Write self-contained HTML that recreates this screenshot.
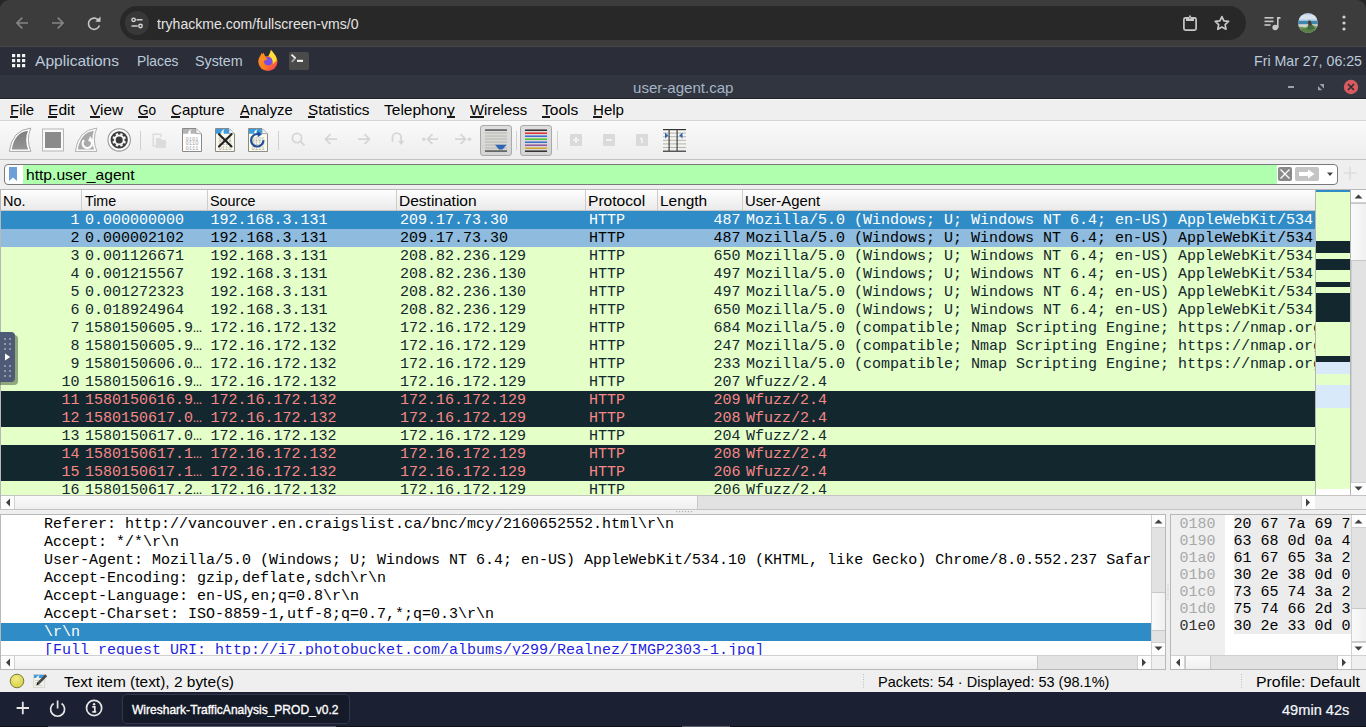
<!DOCTYPE html>
<html><head><meta charset="utf-8"><style>
*{box-sizing:border-box}
html,body{margin:0;padding:0}
body{width:1366px;height:727px;overflow:hidden;position:relative;background:#efefef;font-family:"Liberation Sans",sans-serif}
.a{position:absolute}
.t{position:absolute;white-space:pre;line-height:1}
.m{position:absolute;white-space:pre;font-family:"Liberation Mono",monospace;font-size:15px;line-height:18px}
svg{position:absolute;overflow:visible}
</style></head><body>
<div class="a" style="left:0;top:0;width:1366px;height:46px;background:#3c3c3c"></div>
<svg style="left:0;top:0" width="10" height="10"><path d="M0 0H9A9 9 0 0 0 0 9Z" fill="#262626"/></svg>
<svg style="left:1356px;top:0" width="10" height="10"><path d="M10 0H1A9 9 0 0 1 10 9Z" fill="#262626"/></svg>
<div class="a" style="left:120px;top:6px;width:1126px;height:34px;border-radius:17px;background:#282828"></div>
<div class="a" style="left:125px;top:11px;width:24px;height:24px;border-radius:12px;background:#383838"></div>
<svg style="left:0;top:0" width="120" height="46"><g fill="none" stroke="#858585" stroke-width="1.6"><path d="M17 23H28M22.3 17.6L16.9 23L22.3 28.4"/><path d="M52 23H63M57.7 17.6L63.1 23L57.7 28.4"/></g><g fill="none" stroke="#c8c8c8" stroke-width="1.6"><path d="M99.2 21.5A5.6 5.6 0 1 0 99.4 25.5"/></g><path d="M95.5 17H100.5V22H95.5Z" fill="none"/><path d="M100.5 16.5V21.8H95.2Z" fill="#c8c8c8"/></svg>
<svg style="left:125px;top:11px" width="24" height="24"><g fill="none" stroke="#d8d8d8" stroke-width="1.4"><circle cx="8.6" cy="8.8" r="1.7"/><path d="M11.5 8.8H17.5"/><circle cx="15.5" cy="15" r="1.7"/><path d="M6.5 15H12.7"/></g></svg>
<div class="t" style="left:156.93px;top:17px;font-size:14px;color:#e3e3e3;font-weight:400;font-family:'Liberation Sans';transform:scaleX(1.0039);transform-origin:0 0;">tryhackme.com/fullscreen-vms/0</div>
<svg style="left:1176px;top:8px" width="190" height="32"><g fill="none" stroke="#c8c8c8" stroke-width="1.7"><rect x="7.9" y="9.8" width="12.2" height="12.4" rx="1.6"/></g><path d="M10 9H18V13H10Z" fill="#c8c8c8"/><path d="M12.6 9.2L14 6.8L15.4 9.2Z" fill="#c8c8c8"/><rect x="13.2" y="9.6" width="1.6" height="1" fill="#555"/><path d="M45.90 8.60L47.90 12.85L52.56 13.44L49.13 16.65L50.01 21.26L45.90 19.00L41.79 21.26L42.67 16.65L39.24 13.44L43.90 12.85Z" fill="none" stroke="#c8c8c8" stroke-width="1.7" stroke-linejoin="round"/><g fill="#c8c8c8"><rect x="88.5" y="9" width="9" height="1.6"/><rect x="88.5" y="12.6" width="9" height="1.6"/><rect x="88.5" y="16.2" width="6" height="1.6"/><rect x="101" y="9" width="1.6" height="11"/><rect x="101" y="9" width="3.5" height="1.8"/><circle cx="99.2" cy="19.5" r="2.8"/></g><g fill="#d0d0d0"><circle cx="168" cy="9" r="1.6"/><circle cx="168" cy="15" r="1.6"/><circle cx="168" cy="21" r="1.6"/></g></svg>
<svg style="left:1298px;top:13px" width="20" height="20"><defs><clipPath id="av"><circle cx="10" cy="10" r="9.9"/></clipPath></defs><g clip-path="url(#av)"><rect width="20" height="20" fill="#bcd2e6"/><rect y="2" width="20" height="4" fill="#d6e2ee"/><rect y="7.8" width="20" height="3.6" fill="#3f86ad"/><rect y="11.4" width="20" height="2.4" fill="#d4d2c4"/><path d="M0 13.5L8 14.5L12 11L20 14V20H0Z" fill="#6f9350"/><path d="M4 16L10 15L16 17L20 16V20H0Z" fill="#5b7e44"/><path d="M10.3 7.8C11.6 7 13 7.6 13.2 9L14 12.5L11 14L10.2 11Z" fill="#4a3a2e"/><path d="M10.5 12L14.5 12.5L17 16L9 17Z" fill="#3f6a45"/></g></svg>
<div class="a" style="left:0;top:46px;width:1366px;height:1px;background:#464847"></div>
<div class="a" style="left:0;top:47px;width:1366px;height:28px;background:#2b2e38"></div>
<svg style="left:0;top:0" width="40" height="75"><g fill="#f2f2f2"><rect x="12" y="54" width="3.2" height="3.2"/><rect x="17" y="54" width="3.2" height="3.2"/><rect x="22" y="54" width="3.2" height="3.2"/><rect x="12" y="59" width="3.2" height="3.2"/><rect x="17" y="59" width="3.2" height="3.2"/><rect x="22" y="59" width="3.2" height="3.2"/><rect x="12" y="64" width="3.2" height="3.2"/><rect x="17" y="64" width="3.2" height="3.2"/><rect x="22" y="64" width="3.2" height="3.2"/></g></svg>
<div class="t" style="left:35.0px;top:53px;font-size:15px;color:#bccadb;font-weight:400;font-family:'Liberation Sans';transform:scaleX(1.0385);transform-origin:0 0;">Applications</div>
<div class="t" style="left:136.95px;top:53px;font-size:15px;color:#bccadb;font-weight:400;font-family:'Liberation Sans';transform:scaleX(0.9217);transform-origin:0 0;">Places</div>
<div class="t" style="left:194.71px;top:53px;font-size:15px;color:#bccadb;font-weight:400;font-family:'Liberation Sans';transform:scaleX(0.9538);transform-origin:0 0;">System</div>
<svg style="left:254px;top:47px" width="28" height="26"><defs><linearGradient id="ffg" x1="0.1" y1="0.2" x2="0.8" y2="1"><stop offset="0" stop-color="#ff8f1f"/><stop offset="0.6" stop-color="#ff7a1f"/><stop offset="1" stop-color="#f5386a"/></linearGradient></defs><circle cx="13.9" cy="14.5" r="9.6" fill="url(#ffg)"/><path d="M10.2 2.5L17 2.5L15.5 8.5L13 9.6L10.6 9L9.6 5.5Z" fill="#2b2e38"/><path d="M4 2L9.8 2L9.6 5L7.4 5.8L6.4 7.2L3 6Z" fill="#2b2e38"/><path d="M7.4 5.8L6.4 9.5L9 9Z M9.6 5.5L9 9L10.8 9Z" fill="#ff8f1f"/><path d="M16.8 2.8C19.5 5.5 22.5 9 22.6 13.5L19 17C18.5 12 16 9.5 14.5 8.5C15.8 7 16.5 5 16.8 2.8Z" fill="#ffde3a"/><circle cx="14.2" cy="14.2" r="4.3" fill="#7a4fe0"/><path d="M6 11.5C8 10 11 10.2 13.6 12.2L11 13.5C9 14 7 13 6 11.5Z" fill="#ff8c1c"/></svg>
<div class="a" style="left:289px;top:52px;width:20px;height:18px;border-radius:2px;background:#4a4a4a"></div>
<svg style="left:289px;top:52px" width="20" height="18"><path d="M6.3 6.2L2.8 9.8" fill="none" stroke="#a8a8a8" stroke-width="1.7"/><path d="M2.5 2.6L6.6 6.4" fill="none" stroke="#f2f2f2" stroke-width="1.8"/><rect x="8" y="7.8" width="6" height="2.1" fill="#f4f4f4"/></svg>
<div class="t" style="left:1253.73px;top:53px;font-size:15px;color:#bccadb;font-weight:400;font-family:'Liberation Sans';transform:scaleX(0.9456);transform-origin:0 0;">Fri Mar 27, 06:25</div>
<div class="a" style="left:0;top:75px;width:1366px;height:24px;background:#31353f"></div>
<div class="a" style="left:0;top:98px;width:1366px;height:1px;background:#21242d"></div>
<div class="t" style="left:632.55px;top:80px;font-size:15px;color:#a6b4c6;font-weight:400;font-family:'Liberation Sans';transform:scaleX(1.0044);transform-origin:0 0;">user-agent.cap</div>
<svg style="left:1280px;top:75px" width="86" height="24"><rect x="8" y="11" width="6" height="2" fill="#9aa1ad"/><path d="M39.6 9H44V13.4Z" fill="#9aa1ad"/><path d="M38 11V15.2H42.2Z" fill="#9aa1ad"/><circle cx="71" cy="12" r="7.2" fill="#d95a5f"/><path d="M68 9L74 15M74 9L68 15" stroke="#2a2d36" stroke-width="1.6"/></svg>
<div class="a" style="left:0;top:99px;width:1366px;height:22px;background:#efefef;border-top:1px solid #fafafa;border-bottom:1px solid #d4d4d4"></div>
<div class="t" style="left:9.6px;top:102px;font-size:15px;color:#000;font-weight:400;font-family:'Liberation Sans';transform:scaleX(0.9971);transform-origin:0 0;">File</div>
<div class="a" style="left:10.3px;top:116px;width:7.6px;height:2px;background:#1a1a1a"></div>
<div class="t" style="left:48.28px;top:102px;font-size:15px;color:#000;font-weight:400;font-family:'Liberation Sans';transform:scaleX(1.0407);transform-origin:0 0;">Edit</div>
<div class="a" style="left:48.0px;top:116px;width:8.7px;height:2px;background:#1a1a1a"></div>
<div class="t" style="left:90.2px;top:102px;font-size:15px;color:#000;font-weight:400;font-family:'Liberation Sans';transform:scaleX(1.0266);transform-origin:0 0;">View</div>
<div class="a" style="left:90.0px;top:116px;width:9.8px;height:2px;background:#1a1a1a"></div>
<div class="t" style="left:137.86px;top:102px;font-size:15px;color:#000;font-weight:400;font-family:'Liberation Sans';transform:scaleX(0.9095);transform-origin:0 0;">Go</div>
<div class="a" style="left:138.0px;top:116px;width:9.5px;height:2px;background:#1a1a1a"></div>
<div class="t" style="left:170.92px;top:102px;font-size:15px;color:#000;font-weight:400;font-family:'Liberation Sans';transform:scaleX(1.0044);transform-origin:0 0;">Capture</div>
<div class="a" style="left:171.3px;top:116px;width:8.4px;height:2px;background:#1a1a1a"></div>
<div class="t" style="left:240.1px;top:102px;font-size:15px;color:#000;font-weight:400;font-family:'Liberation Sans';transform:scaleX(0.9875);transform-origin:0 0;">Analyze</div>
<div class="a" style="left:240.0px;top:116px;width:9.0px;height:2px;background:#1a1a1a"></div>
<div class="t" style="left:307.69px;top:102px;font-size:15px;color:#000;font-weight:400;font-family:'Liberation Sans';transform:scaleX(1.0247);transform-origin:0 0;">Statistics</div>
<div class="a" style="left:308.0px;top:116px;width:7.0px;height:2px;background:#1a1a1a"></div>
<div class="t" style="left:384.14px;top:102px;font-size:15px;color:#000;font-weight:400;font-family:'Liberation Sans';transform:scaleX(1.0338);transform-origin:0 0;">Telephony</div>
<div class="a" style="left:447.0px;top:116px;width:8.0px;height:2px;background:#1a1a1a"></div>
<div class="t" style="left:470.3px;top:102px;font-size:15px;color:#000;font-weight:400;font-family:'Liberation Sans';transform:scaleX(0.9930);transform-origin:0 0;">Wireless</div>
<div class="a" style="left:470.3px;top:116px;width:13.7px;height:2px;background:#1a1a1a"></div>
<div class="t" style="left:542.14px;top:102px;font-size:15px;color:#000;font-weight:400;font-family:'Liberation Sans';transform:scaleX(1.0366);transform-origin:0 0;">Tools</div>
<div class="a" style="left:542.0px;top:116px;width:8.0px;height:2px;background:#1a1a1a"></div>
<div class="t" style="left:592.7px;top:102px;font-size:15px;color:#000;font-weight:400;font-family:'Liberation Sans';transform:scaleX(1.0048);transform-origin:0 0;">Help</div>
<div class="a" style="left:593.3px;top:116px;width:8.7px;height:2px;background:#1a1a1a"></div>
<div class="a" style="left:0;top:121px;width:1366px;height:38px;background:linear-gradient(#fafafa,#ededed)"></div>
<div class="a" style="left:0;top:159px;width:1366px;height:1px;background:#c2c2c2"></div>
<svg style="left:0;top:121px" width="140" height="38"><defs><linearGradient id="fin" x1="0" y1="0" x2="0" y2="1"><stop offset="0" stop-color="#7d7d7d"/><stop offset="1" stop-color="#959595"/></linearGradient></defs><path d="M9.3 30.4Q12 9 30.8 7.1Q26 18 30.8 30.4Z" fill="#fdfdfd" stroke="#a8a8a8" stroke-width="1"/><path d="M11.8 28.6Q14.5 11.5 27.9 9.8Q24.3 19 28.1 28.6Z" fill="url(#fin)"/><rect x="42.5" y="8" width="21" height="22" fill="#fafafa" stroke="#b5b5b5"/><rect x="45" y="11" width="16" height="16" fill="#8a8a8a"/><path d="M75.3 30.4Q78 9 96.8 7.1Q92 18 96.8 30.4Z" fill="#fdfdfd" stroke="#b0b0b0" stroke-width="1"/><path d="M77.8 28.6Q80.5 11.5 93.9 9.8Q90.3 19 94.1 28.6Z" fill="#a9a9a9"/><path d="M84 19.2A4.6 4.6 0 1 0 90.6 19.2" fill="none" stroke="#fbfbfb" stroke-width="2.3"/><path d="M88 20.2L93.2 20.2L90.2 15Z" fill="#fbfbfb"/><circle cx="119.2" cy="18.9" r="11.2" fill="#fbfbfb" stroke="#999" stroke-width="1.1"/><circle cx="119.2" cy="18.9" r="8.6" fill="#3c3c3c"/></svg>
<svg style="left:0;top:0" width="140" height="160"><g fill="#f4f4f4"><rect x="123.27" y="140.88" width="2.4" height="2.4" transform="rotate(22.5 124.47 142.08)"/><rect x="120.18" y="143.97" width="2.4" height="2.4" transform="rotate(67.5 121.38 145.17)"/><rect x="115.82" y="143.97" width="2.4" height="2.4" transform="rotate(112.5 117.02 145.17)"/><rect x="112.73" y="140.88" width="2.4" height="2.4" transform="rotate(157.5 113.93 142.08)"/><rect x="112.73" y="136.52" width="2.4" height="2.4" transform="rotate(202.5 113.93 137.72)"/><rect x="115.82" y="133.43" width="2.4" height="2.4" transform="rotate(247.5 117.02 134.63)"/><rect x="120.18" y="133.43" width="2.4" height="2.4" transform="rotate(292.5 121.38 134.63)"/><rect x="123.27" y="136.52" width="2.4" height="2.4" transform="rotate(337.5 124.47 137.72)"/><circle cx="119.2" cy="139.9" r="5.4"/></g><circle cx="119.2" cy="139.9" r="3.5" fill="#3a3a3a"/></svg>
<div class="a" style="left:140px;top:131px;width:1px;height:19px;background:#d0d0d0"></div>
<div class="a" style="left:278px;top:131px;width:1px;height:19px;background:#d0d0d0"></div>
<div class="a" style="left:516px;top:131px;width:1px;height:19px;background:#d0d0d0"></div>
<div class="a" style="left:557px;top:131px;width:1px;height:19px;background:#d0d0d0"></div>
<svg style="left:150px;top:131px" width="20" height="20"><g fill="#dcdcdc"><path d="M2.5 2.5H11.5V6H10V4H4V14H6V15.5H2.5Z"/><rect x="6" y="9" width="10" height="8"/><path d="M6 7H10.5L12 9H6Z"/></g></svg>
<svg style="left:181.5px;top:128px" width="21" height="24"><path d="M0.5 0.5H14L19.5 6V23.5H0.5Z" fill="#ffffff" stroke="#8a8a8a"/><path d="M1 1H13.8L18 5.2V5.8H1Z" fill="#b4b4b4"/><path d="M14 0.8V5.6H19" fill="#f4f4f4" stroke="#9a9a9a" stroke-width="0.7"/><path d="M6.5 6C5.5 4.5 7 2 9.5 1.3C8.3 2.8 8.2 4.5 9 6Z" fill="#ffffff"/><g opacity="0.99" font-family="Liberation Mono" font-size="5.4" fill="#a8a8a8"><text x="3.5" y="12.8" textLength="13">0101</text><text x="3.5" y="17.3" textLength="13">0110</text><text x="3.5" y="21.8" textLength="13">0111</text></g></svg>
<svg style="left:214.5px;top:128px" width="21" height="24"><path d="M0.5 0.5H14L19.5 6V23.5H0.5Z" fill="#fbfbea" stroke="#8a8a8a"/><path d="M1 1H13.8L18 5.2V5.8H1Z" fill="#3d9be0"/><path d="M14 0.8V5.6H19" fill="#f4f4f4" stroke="#9a9a9a" stroke-width="0.7"/><path d="M6.5 6C5.5 4.5 7 2 9.5 1.3C8.3 2.8 8.2 4.5 9 6Z" fill="#fbfbea"/><g opacity="0.99" font-family="Liberation Mono" font-size="5.4" fill="#a8a8a8"><text x="3.5" y="12.8" textLength="13">0101</text><text x="3.5" y="17.3" textLength="13">0110</text><text x="3.5" y="21.8" textLength="13">0111</text></g><path d="M4 6.2L16.5 18.5M16.5 6.2L4 18.5" stroke="#222" stroke-width="2.1" stroke-linecap="round"/></svg>
<svg style="left:247.5px;top:128px" width="21" height="24"><path d="M0.5 0.5H14L19.5 6V23.5H0.5Z" fill="#fbfbea" stroke="#8a8a8a"/><path d="M1 1H13.8L18 5.2V5.8H1Z" fill="#3d9be0"/><path d="M14 0.8V5.6H19" fill="#f4f4f4" stroke="#9a9a9a" stroke-width="0.7"/><path d="M6.5 6C5.5 4.5 7 2 9.5 1.3C8.3 2.8 8.2 4.5 9 6Z" fill="#fbfbea"/><g opacity="0.99" font-family="Liberation Mono" font-size="5.4" fill="#a8a8a8"><text x="3.5" y="12.8" textLength="13">0101</text><text x="3.5" y="17.3" textLength="13">0110</text><text x="3.5" y="21.8" textLength="13">0111</text></g><path d="M15.5 12.2A6.2 6.2 0 1 1 10.5 6.2" fill="none" stroke="#1f4e9c" stroke-width="2.1"/><path d="M9.5 3.2L14 6.3L9.7 9.2Z" fill="#1f4e9c"/></svg>
<svg style="left:280px;top:121px" width="200" height="38"><g fill="none" stroke="#d6d6d6" stroke-width="1.8"><circle cx="17" cy="17" r="4.6"/><path d="M20.5 20.5L24.5 24.5"/><path d="M45.5 18.2H57M50.5 13.2L45.5 18.2L50.5 23.2"/><path d="M78 18.2H89.5M84.5 13.2L89.5 18.2L84.5 23.2"/><path d="M112.5 21V16.5A4.3 4.3 0 0 1 121.1 16.5V20.5"/></g><path d="M118 19.8H124.2L121.1 24Z" fill="#d6d6d6"/><g fill="none" stroke="#d6d6d6" stroke-width="1.8"><path d="M147.5 18.2H158M152.5 13.2L147.5 18.2L152.5 23.2"/><path d="M175 18.2H185.5M180.5 13.2L185.5 18.2L180.5 23.2"/></g><g fill="#d6d6d6"><circle cx="143.8" cy="18.2" r="1.8"/><circle cx="189.5" cy="18.2" r="1.8"/></g></svg>
<div class="a" style="left:480px;top:125px;width:32px;height:31px;border:1px solid #a9a9a9;border-radius:3px;background:linear-gradient(#dedede,#d4d4d4)"></div>
<div class="a" style="left:520px;top:125px;width:32px;height:31px;border:1px solid #a9a9a9;border-radius:3px;background:linear-gradient(#dedede,#d4d4d4)"></div>
<svg style="left:480px;top:125px" width="32" height="31"><rect x="5" y="4.5" width="22" height="1.1" fill="#222"/><rect x="5" y="7.5" width="22" height="1.1" fill="#b9b9b0"/><rect x="5" y="10.5" width="22" height="1.1" fill="#b9b9b0"/><rect x="5" y="13.5" width="22" height="1.1" fill="#b9b9b0"/><rect x="5" y="16.5" width="22" height="1.1" fill="#b9b9b0"/><rect x="5" y="19.5" width="22" height="1.1" fill="#b9b9b0"/><rect x="5" y="22.5" width="22" height="1.1" fill="#b9b9b0"/><rect x="5" y="25.5" width="22" height="1.1" fill="#222"/><path d="M15 19.8H26.5L22.5 24.5H19Z" fill="#2f66b3"/></svg>
<svg style="left:520px;top:125px" width="32" height="31"><rect x="5" y="4.5" width="22" height="1.4" fill="#222"/><rect x="5" y="7.5" width="22" height="1.4" fill="#e02020"/><rect x="5" y="10.5" width="22" height="1.4" fill="#2f5fcf"/><rect x="5" y="13.5" width="22" height="1.4" fill="#40c020"/><rect x="5" y="16.5" width="22" height="1.4" fill="#2f5fcf"/><rect x="5" y="19.5" width="22" height="1.4" fill="#8a4a9a"/><rect x="5" y="22.5" width="22" height="1.4" fill="#d0a020"/><rect x="5" y="25.5" width="22" height="1.4" fill="#222"/></svg>
<svg style="left:560px;top:121px" width="100" height="38"><g fill="#dadada"><rect x="10" y="13" width="12" height="12" rx="1"/><rect x="43" y="13" width="12" height="12" rx="1"/><rect x="76" y="13" width="12" height="12" rx="1"/></g><g fill="#f2f2f2"><rect x="13" y="18" width="6" height="2"/><rect x="15" y="16" width="2" height="6"/><rect x="46" y="18" width="6" height="2"/><path d="M80.5 16.5H82.7V22H81V18.5L79.8 19Z"/></g></svg>
<svg style="left:662.8px;top:126px" width="24" height="26"><rect x="0" y="3.0" width="23" height="1.2" fill="#333"/><rect x="0" y="6.6" width="23" height="1" fill="#b5b5a8"/><rect x="0" y="10.2" width="23" height="1" fill="#b5b5a8"/><rect x="0" y="13.8" width="23" height="1" fill="#b5b5a8"/><rect x="0" y="17.4" width="23" height="1" fill="#b5b5a8"/><rect x="0" y="21.0" width="23" height="1" fill="#b5b5a8"/><rect x="0" y="24.6" width="23" height="1.2" fill="#333"/><rect x="5.5" y="3" width="1.2" height="22" fill="#444"/><rect x="13.5" y="3" width="1.2" height="22" fill="#444"/><path d="M2 6.5L5.3 9.5L2 12.5Z" fill="#2f66b3"/><path d="M19.5 6.5L16.2 9.5L19.5 12.5Z" fill="#2f66b3"/></svg>
<div class="a" style="left:4px;top:164px;width:1334px;height:21px;border:1px solid #7a7a7a;border-radius:4px;background:#fff"></div>
<div class="a" style="left:22.5px;top:165px;width:1254.5px;height:19px;background:#afffaf"></div>
<svg style="left:8px;top:166px" width="12" height="16"><path d="M1 1H9V15L5 11.5L1 15Z" fill="#6f9fd8"/></svg>
<div class="t" style="left:25.93px;top:167px;font-size:15px;color:#000;font-weight:400;font-family:'Liberation Sans';transform:scaleX(1.0418);transform-origin:0 0;">http.user_agent</div>
<div class="a" style="left:1278px;top:167px;width:14px;height:14px;border-radius:2px;background:#8a8a8a"></div>
<svg style="left:1278px;top:167px" width="14" height="14"><path d="M2.5 2.5L11.5 11.5M11.5 2.5L2.5 11.5" stroke="#fff" stroke-width="1.3"/></svg>
<div class="a" style="left:1295px;top:167px;width:24px;height:14px;border-radius:2px;background:#c4c4c4"></div>
<svg style="left:1295px;top:167px" width="24" height="14"><path d="M4 5H13V2.5L19.5 7L13 11.5V9H4Z" fill="#fff"/></svg>
<svg style="left:1320px;top:167px" width="20" height="14"><path d="M7 5.5H13L10 9Z" fill="#444"/></svg>
<svg style="left:1340px;top:163px" width="22" height="22"><path d="M10 3.5V16.5M3.5 10H16.5" stroke="#d6d6d6" stroke-width="1.2"/></svg>
<div class="a" style="left:0;top:189px;width:1366px;height:1px;background:#b8b8b8"></div>
<div class="a" style="left:0;top:189px;width:1px;height:320px;background:#b8b8b8"></div>
<div class="a" style="left:1px;top:190px;width:1315px;height:21px;background:linear-gradient(#fefefe,#e9e9e9)"></div>
<div class="a" style="left:81px;top:190px;width:1px;height:21px;background:#cccccc"></div>
<div class="a" style="left:207px;top:190px;width:1px;height:21px;background:#cccccc"></div>
<div class="a" style="left:396px;top:190px;width:1px;height:21px;background:#cccccc"></div>
<div class="a" style="left:585px;top:190px;width:1px;height:21px;background:#cccccc"></div>
<div class="a" style="left:657px;top:190px;width:1px;height:21px;background:#cccccc"></div>
<div class="a" style="left:742px;top:190px;width:1px;height:21px;background:#cccccc"></div>
<div class="a" style="left:1px;top:210px;width:1315px;height:1px;background:#c9c6c2"></div>
<div class="t" style="left:3.32px;top:193px;font-size:15px;color:#000;font-weight:400;font-family:'Liberation Sans';transform:scaleX(0.9639);transform-origin:0 0;">No.</div>
<div class="t" style="left:85.46px;top:193px;font-size:15px;color:#000;font-weight:400;font-family:'Liberation Sans';transform:scaleX(0.9519);transform-origin:0 0;">Time</div>
<div class="t" style="left:209.71px;top:193px;font-size:15px;color:#000;font-weight:400;font-family:'Liberation Sans';transform:scaleX(0.9594);transform-origin:0 0;">Source</div>
<div class="t" style="left:399.38px;top:193px;font-size:15px;color:#000;font-weight:400;font-family:'Liberation Sans';transform:scaleX(1.0341);transform-origin:0 0;">Destination</div>
<div class="t" style="left:587.68px;top:193px;font-size:15px;color:#000;font-weight:400;font-family:'Liberation Sans';transform:scaleX(1.0376);transform-origin:0 0;">Protocol</div>
<div class="t" style="left:659.68px;top:193px;font-size:15px;color:#000;font-weight:400;font-family:'Liberation Sans';transform:scaleX(1.0288);transform-origin:0 0;">Length</div>
<div class="t" style="left:744.98px;top:193px;font-size:15px;color:#000;font-weight:400;font-family:'Liberation Sans';transform:scaleX(0.9886);transform-origin:0 0;">User-Agent</div>
<div class="a" style="left:1px;top:211px;width:1315px;height:284px;overflow:hidden;background:#fff">
<div class="a" style="left:0;top:0px;width:1315px;height:18px;background:#308cc6;color:#ffffff">
<div class="m" style="right:1236.5px;top:1px">1</div>
<div class="m" style="left:84px;top:1px">0.000000000</div>
<div class="m" style="left:209.5px;top:1px">192.168.3.131</div>
<div class="m" style="left:399px;top:1px">209.17.73.30</div>
<div class="m" style="left:588px;top:1px">HTTP</div>
<div class="m" style="right:575.5px;top:1px">487</div>
<div class="m" style="left:745px;top:1px">Mozilla/5.0 (Windows; U; Windows NT 6.4; en-US) AppleWebKit/534.10 (KHTML, like Gecko)</div>
</div>
<div class="a" style="left:0;top:18px;width:1315px;height:18px;background:#8ebbde;color:#000000">
<div class="m" style="right:1236.5px;top:1px">2</div>
<div class="m" style="left:84px;top:1px">0.000002102</div>
<div class="m" style="left:209.5px;top:1px">192.168.3.131</div>
<div class="m" style="left:399px;top:1px">209.17.73.30</div>
<div class="m" style="left:588px;top:1px">HTTP</div>
<div class="m" style="right:575.5px;top:1px">487</div>
<div class="m" style="left:745px;top:1px">Mozilla/5.0 (Windows; U; Windows NT 6.4; en-US) AppleWebKit/534.10 (KHTML, like Gecko)</div>
</div>
<div class="a" style="left:0;top:36px;width:1315px;height:18px;background:#e4ffc7;color:#12272e">
<div class="m" style="right:1236.5px;top:1px">3</div>
<div class="m" style="left:84px;top:1px">0.001126671</div>
<div class="m" style="left:209.5px;top:1px">192.168.3.131</div>
<div class="m" style="left:399px;top:1px">208.82.236.129</div>
<div class="m" style="left:588px;top:1px">HTTP</div>
<div class="m" style="right:575.5px;top:1px">650</div>
<div class="m" style="left:745px;top:1px">Mozilla/5.0 (Windows; U; Windows NT 6.4; en-US) AppleWebKit/534.10 (KHTML, like Gecko)</div>
</div>
<div class="a" style="left:0;top:54px;width:1315px;height:18px;background:#e4ffc7;color:#12272e">
<div class="m" style="right:1236.5px;top:1px">4</div>
<div class="m" style="left:84px;top:1px">0.001215567</div>
<div class="m" style="left:209.5px;top:1px">192.168.3.131</div>
<div class="m" style="left:399px;top:1px">208.82.236.130</div>
<div class="m" style="left:588px;top:1px">HTTP</div>
<div class="m" style="right:575.5px;top:1px">497</div>
<div class="m" style="left:745px;top:1px">Mozilla/5.0 (Windows; U; Windows NT 6.4; en-US) AppleWebKit/534.10 (KHTML, like Gecko)</div>
</div>
<div class="a" style="left:0;top:72px;width:1315px;height:18px;background:#e4ffc7;color:#12272e">
<div class="m" style="right:1236.5px;top:1px">5</div>
<div class="m" style="left:84px;top:1px">0.001272323</div>
<div class="m" style="left:209.5px;top:1px">192.168.3.131</div>
<div class="m" style="left:399px;top:1px">208.82.236.130</div>
<div class="m" style="left:588px;top:1px">HTTP</div>
<div class="m" style="right:575.5px;top:1px">497</div>
<div class="m" style="left:745px;top:1px">Mozilla/5.0 (Windows; U; Windows NT 6.4; en-US) AppleWebKit/534.10 (KHTML, like Gecko)</div>
</div>
<div class="a" style="left:0;top:90px;width:1315px;height:18px;background:#e4ffc7;color:#12272e">
<div class="m" style="right:1236.5px;top:1px">6</div>
<div class="m" style="left:84px;top:1px">0.018924964</div>
<div class="m" style="left:209.5px;top:1px">192.168.3.131</div>
<div class="m" style="left:399px;top:1px">208.82.236.129</div>
<div class="m" style="left:588px;top:1px">HTTP</div>
<div class="m" style="right:575.5px;top:1px">650</div>
<div class="m" style="left:745px;top:1px">Mozilla/5.0 (Windows; U; Windows NT 6.4; en-US) AppleWebKit/534.10 (KHTML, like Gecko)</div>
</div>
<div class="a" style="left:0;top:108px;width:1315px;height:18px;background:#e4ffc7;color:#12272e">
<div class="m" style="right:1236.5px;top:1px">7</div>
<div class="m" style="left:84px;top:1px">1580150605.9…</div>
<div class="m" style="left:209.5px;top:1px">172.16.172.132</div>
<div class="m" style="left:399px;top:1px">172.16.172.129</div>
<div class="m" style="left:588px;top:1px">HTTP</div>
<div class="m" style="right:575.5px;top:1px">684</div>
<div class="m" style="left:745px;top:1px">Mozilla/5.0 (compatible; Nmap Scripting Engine; https://nmap.org/book/nse.html)</div>
</div>
<div class="a" style="left:0;top:126px;width:1315px;height:18px;background:#e4ffc7;color:#12272e">
<div class="m" style="right:1236.5px;top:1px">8</div>
<div class="m" style="left:84px;top:1px">1580150605.9…</div>
<div class="m" style="left:209.5px;top:1px">172.16.172.132</div>
<div class="m" style="left:399px;top:1px">172.16.172.129</div>
<div class="m" style="left:588px;top:1px">HTTP</div>
<div class="m" style="right:575.5px;top:1px">247</div>
<div class="m" style="left:745px;top:1px">Mozilla/5.0 (compatible; Nmap Scripting Engine; https://nmap.org/book/nse.html)</div>
</div>
<div class="a" style="left:0;top:144px;width:1315px;height:18px;background:#e4ffc7;color:#12272e">
<div class="m" style="right:1236.5px;top:1px">9</div>
<div class="m" style="left:84px;top:1px">1580150606.0…</div>
<div class="m" style="left:209.5px;top:1px">172.16.172.132</div>
<div class="m" style="left:399px;top:1px">172.16.172.129</div>
<div class="m" style="left:588px;top:1px">HTTP</div>
<div class="m" style="right:575.5px;top:1px">233</div>
<div class="m" style="left:745px;top:1px">Mozilla/5.0 (compatible; Nmap Scripting Engine; https://nmap.org/book/nse.html)</div>
</div>
<div class="a" style="left:0;top:162px;width:1315px;height:18px;background:#e4ffc7;color:#12272e">
<div class="m" style="right:1236.5px;top:1px">10</div>
<div class="m" style="left:84px;top:1px">1580150616.9…</div>
<div class="m" style="left:209.5px;top:1px">172.16.172.132</div>
<div class="m" style="left:399px;top:1px">172.16.172.129</div>
<div class="m" style="left:588px;top:1px">HTTP</div>
<div class="m" style="right:575.5px;top:1px">207</div>
<div class="m" style="left:745px;top:1px">Wfuzz/2.4</div>
</div>
<div class="a" style="left:0;top:180px;width:1315px;height:18px;background:#12272e;color:#f78787">
<div class="m" style="right:1236.5px;top:1px">11</div>
<div class="m" style="left:84px;top:1px">1580150616.9…</div>
<div class="m" style="left:209.5px;top:1px">172.16.172.132</div>
<div class="m" style="left:399px;top:1px">172.16.172.129</div>
<div class="m" style="left:588px;top:1px">HTTP</div>
<div class="m" style="right:575.5px;top:1px">209</div>
<div class="m" style="left:745px;top:1px">Wfuzz/2.4</div>
</div>
<div class="a" style="left:0;top:198px;width:1315px;height:18px;background:#12272e;color:#f78787">
<div class="m" style="right:1236.5px;top:1px">12</div>
<div class="m" style="left:84px;top:1px">1580150617.0…</div>
<div class="m" style="left:209.5px;top:1px">172.16.172.132</div>
<div class="m" style="left:399px;top:1px">172.16.172.129</div>
<div class="m" style="left:588px;top:1px">HTTP</div>
<div class="m" style="right:575.5px;top:1px">208</div>
<div class="m" style="left:745px;top:1px">Wfuzz/2.4</div>
</div>
<div class="a" style="left:0;top:216px;width:1315px;height:18px;background:#e4ffc7;color:#12272e">
<div class="m" style="right:1236.5px;top:1px">13</div>
<div class="m" style="left:84px;top:1px">1580150617.0…</div>
<div class="m" style="left:209.5px;top:1px">172.16.172.132</div>
<div class="m" style="left:399px;top:1px">172.16.172.129</div>
<div class="m" style="left:588px;top:1px">HTTP</div>
<div class="m" style="right:575.5px;top:1px">204</div>
<div class="m" style="left:745px;top:1px">Wfuzz/2.4</div>
</div>
<div class="a" style="left:0;top:234px;width:1315px;height:18px;background:#12272e;color:#f78787">
<div class="m" style="right:1236.5px;top:1px">14</div>
<div class="m" style="left:84px;top:1px">1580150617.1…</div>
<div class="m" style="left:209.5px;top:1px">172.16.172.132</div>
<div class="m" style="left:399px;top:1px">172.16.172.129</div>
<div class="m" style="left:588px;top:1px">HTTP</div>
<div class="m" style="right:575.5px;top:1px">208</div>
<div class="m" style="left:745px;top:1px">Wfuzz/2.4</div>
</div>
<div class="a" style="left:0;top:252px;width:1315px;height:18px;background:#12272e;color:#f78787">
<div class="m" style="right:1236.5px;top:1px">15</div>
<div class="m" style="left:84px;top:1px">1580150617.1…</div>
<div class="m" style="left:209.5px;top:1px">172.16.172.132</div>
<div class="m" style="left:399px;top:1px">172.16.172.129</div>
<div class="m" style="left:588px;top:1px">HTTP</div>
<div class="m" style="right:575.5px;top:1px">206</div>
<div class="m" style="left:745px;top:1px">Wfuzz/2.4</div>
</div>
<div class="a" style="left:0;top:270px;width:1315px;height:18px;background:#e4ffc7;color:#12272e">
<div class="m" style="right:1236.5px;top:1px">16</div>
<div class="m" style="left:84px;top:1px">1580150617.2…</div>
<div class="m" style="left:209.5px;top:1px">172.16.172.132</div>
<div class="m" style="left:399px;top:1px">172.16.172.129</div>
<div class="m" style="left:588px;top:1px">HTTP</div>
<div class="m" style="right:575.5px;top:1px">206</div>
<div class="m" style="left:745px;top:1px">Wfuzz/2.4</div>
</div>
</div>
<div class="a" style="left:0;top:335px;width:18px;height:50px;border-radius:0 4px 4px 0;background:rgba(40,60,30,0.45)"></div>
<div class="a" style="left:0;top:332px;width:15px;height:50px;border-radius:0 4px 4px 0;background:#4e5a76"></div>
<svg style="left:0;top:332px" width="15" height="50"><g fill="#8c95aa"><rect x="4" y="6" width="2" height="2"/><rect x="4" y="11" width="2" height="2"/><rect x="4" y="16" width="2" height="2"/><rect x="4" y="33" width="2" height="2"/><rect x="4" y="38" width="2" height="2"/><rect x="4" y="43" width="2" height="2"/><rect x="9" y="6" width="2" height="2"/><rect x="9" y="11" width="2" height="2"/><rect x="9" y="16" width="2" height="2"/><rect x="9" y="33" width="2" height="2"/><rect x="9" y="38" width="2" height="2"/><rect x="9" y="43" width="2" height="2"/></g><path d="M5 21.5L10.2 25L5 28.5Z" fill="#fff"/></svg>
<div class="a" style="left:1316px;top:190px;width:34px;height:305px;background:#e4ffc7"></div>
<div class="a" style="left:1316px;top:190px;width:34px;height:2px;background:#308cc6"></div>
<div class="a" style="left:1316px;top:241px;width:34px;height:12px;background:#12272e"></div>
<div class="a" style="left:1316px;top:259px;width:34px;height:11px;background:#12272e"></div>
<div class="a" style="left:1316px;top:282px;width:34px;height:5px;background:#12272e"></div>
<div class="a" style="left:1316px;top:293px;width:34px;height:29px;background:#12272e"></div>
<div class="a" style="left:1316px;top:356px;width:34px;height:6px;background:#12272e"></div>
<div class="a" style="left:1316px;top:362px;width:34px;height:12px;background:#d8e9fa"></div>
<div class="a" style="left:1316px;top:385px;width:34px;height:23px;background:#d8e9fa"></div>
<div class="a" style="left:1316px;top:489px;width:34px;height:6px;background:#ffffff"></div>
<div class="a" style="left:1315px;top:190px;width:1px;height:305px;background:#b4b4b4"></div>
<div class="a" style="left:1350px;top:190px;width:1px;height:305px;background:#b4b4b4"></div>
<div class="a" style="left:1351px;top:190px;width:15px;height:305px;background:#e2e2e2;border-left:1px solid #cfcfcf"></div><div class="a" style="left:1351px;top:190px;width:15px;height:13px;background:#fdfdfd;border-bottom:1px solid #d0d0d0"></div><div class="a" style="left:1351px;top:482px;width:15px;height:13px;background:#fdfdfd;border-top:1px solid #d0d0d0"></div><svg style="left:1351px;top:190px" width="15" height="13"><path d="M3.5 8.5H11.5L7.5 4.5Z" fill="#404040"/></svg><svg style="left:1351px;top:482px" width="15" height="13"><path d="M3.5 4.5H11.5L7.5 8.5Z" fill="#404040"/></svg><div class="a" style="left:1351px;top:203px;width:15px;height:58px;background:linear-gradient(90deg,#fafafa,#f0f0f0);border-bottom:1px solid #c8c8c8;border-top:1px solid #c8c8c8"></div>
<div class="a" style="left:1px;top:496px;width:1314px;height:13px;background:#e2e2e2"></div><div class="a" style="left:14px;top:496px;width:684px;height:13px;background:linear-gradient(#fbfbfb,#efefef);border-left:1px solid #c8c8c8;border-right:1px solid #c8c8c8"></div><div class="a" style="left:1px;top:496px;width:14px;height:13px;background:#fdfdfd;border-right:1px solid #d0d0d0"></div><div class="a" style="left:1301px;top:496px;width:14px;height:13px;background:#fdfdfd;border-left:1px solid #d0d0d0"></div><svg style="left:1px;top:496px" width="14" height="13"><path d="M9 2.5V10.5L5 6.5Z" fill="#404040"/></svg><svg style="left:1301px;top:496px" width="14" height="13"><path d="M5 2.5V10.5L9 6.5Z" fill="#404040"/></svg>
<div class="a" style="left:1315px;top:495px;width:51px;height:14px;background:#efefef;border-top:1px solid #c4c4c4"></div>
<div class="a" style="left:1px;top:495px;width:1314px;height:1px;background:#c4c4c4"></div>
<div class="a" style="left:0;top:509px;width:1366px;height:1px;background:#c4c4c4"></div>
<div class="a" style="left:0;top:510px;width:1366px;height:4px;background:#efefef"></div>
<svg style="left:675px;top:510px" width="20" height="4"><g fill="#b0b0b0"><rect x="1" y="1" width="1.2" height="1.2"/><rect x="4" y="1" width="1.2" height="1.2"/><rect x="7" y="1" width="1.2" height="1.2"/><rect x="10" y="1" width="1.2" height="1.2"/><rect x="13" y="1" width="1.2" height="1.2"/><rect x="16" y="1" width="1.2" height="1.2"/></g></svg>
<div class="a" style="left:0;top:514px;width:1166px;height:156px;border:1px solid #b8b8b8;background:#fff"></div>
<div class="a" style="left:1px;top:515px;width:1150px;height:140px;overflow:hidden;background:#fff">
<div class="m" style="left:43px;top:1px;color:#000;">Referer: http://vancouver.en.craigslist.ca/bnc/mcy/2160652552.html\r\n</div>
<div class="m" style="left:43px;top:19px;color:#000;">Accept: */*\r\n</div>
<div class="m" style="left:43px;top:37px;color:#000;">User-Agent: Mozilla/5.0 (Windows; U; Windows NT 6.4; en-US) AppleWebKit/534.10 (KHTML, like Gecko) Chrome/8.0.552.237 Safari/534.10\r\n</div>
<div class="m" style="left:43px;top:55px;color:#000;">Accept-Encoding: gzip,deflate,sdch\r\n</div>
<div class="m" style="left:43px;top:73px;color:#000;">Accept-Language: en-US,en;q=0.8\r\n</div>
<div class="m" style="left:43px;top:91px;color:#000;">Accept-Charset: ISO-8859-1,utf-8;q=0.7,*;q=0.3\r\n</div>
<div class="a" style="left:0;top:108px;width:1150px;height:18px;background:#308cc6"></div>
<div class="m" style="left:43px;top:109px;color:#fff;">\r\n</div>
<div class="m" style="left:43px;top:127px;color:#1f1fe0;text-decoration:underline;text-decoration-thickness:1px;text-underline-offset:2px;">[Full request URI: http://i7.photobucket.com/albums/y299/Realnez/IMGP2303-1.jpg]</div>
</div>
<div class="a" style="left:1151px;top:515px;width:14px;height:140px;background:#e2e2e2;border-left:1px solid #cfcfcf"></div><div class="a" style="left:1151px;top:515px;width:14px;height:13px;background:#fdfdfd;border-bottom:1px solid #d0d0d0"></div><div class="a" style="left:1151px;top:642px;width:14px;height:13px;background:#fdfdfd;border-top:1px solid #d0d0d0"></div><svg style="left:1151px;top:515px" width="14" height="13"><path d="M3.5 8.5H11.5L7.5 4.5Z" fill="#404040"/></svg><svg style="left:1151px;top:642px" width="14" height="13"><path d="M3.5 4.5H11.5L7.5 8.5Z" fill="#404040"/></svg><div class="a" style="left:1151px;top:592px;width:14px;height:39px;background:linear-gradient(90deg,#fafafa,#f0f0f0);border-bottom:1px solid #c8c8c8;border-top:1px solid #c8c8c8"></div>
<div class="a" style="left:1px;top:656px;width:1150px;height:13px;background:#e2e2e2"></div><div class="a" style="left:14px;top:656px;width:1024px;height:13px;background:linear-gradient(#fbfbfb,#efefef);border-left:1px solid #c8c8c8;border-right:1px solid #c8c8c8"></div><div class="a" style="left:1px;top:656px;width:14px;height:13px;background:#fdfdfd;border-right:1px solid #d0d0d0"></div><div class="a" style="left:1137px;top:656px;width:14px;height:13px;background:#fdfdfd;border-left:1px solid #d0d0d0"></div><svg style="left:1px;top:656px" width="14" height="13"><path d="M9 2.5V10.5L5 6.5Z" fill="#404040"/></svg><svg style="left:1137px;top:656px" width="14" height="13"><path d="M5 2.5V10.5L9 6.5Z" fill="#404040"/></svg>
<div class="a" style="left:1151px;top:655px;width:14px;height:14px;background:#efefef;border-top:1px solid #c8c8c8;border-left:1px solid #c8c8c8"></div>
<div class="a" style="left:1px;top:655px;width:1164px;height:1px;background:#d0d0d0"></div>
<div class="a" style="left:1151px;top:515px;width:1px;height:154px;background:#d0d0d0"></div>
<svg style="left:1166px;top:584px" width="4" height="18"><g fill="#b8b8b8"><rect x="1.5" y="0.0" width="1" height="1"/><rect x="1.5" y="2.5" width="1" height="1"/><rect x="1.5" y="5.0" width="1" height="1"/><rect x="1.5" y="7.5" width="1" height="1"/><rect x="1.5" y="10.0" width="1" height="1"/><rect x="1.5" y="12.5" width="1" height="1"/><rect x="1.5" y="15.0" width="1" height="1"/></g></svg>
<div class="a" style="left:1170px;top:514px;width:196px;height:156px;border:1px solid #b8b8b8;border-right:none;background:#fff"></div>
<div class="a" style="left:1171px;top:515px;width:54px;height:140px;background:#efefef"></div>
<div class="a" style="left:1234px;top:515px;width:117px;height:119px;background:#ececec"></div>
<div class="a" style="left:1171px;top:515px;width:180px;height:140px;overflow:hidden">
<div class="m" style="left:8.5px;top:1px;color:#a9a9a9;line-height:17px">0180</div>
<div class="m" style="left:62.5px;top:1px;color:#000;line-height:17px">20 67 7a 69 7</div>
<div class="m" style="left:8.5px;top:18px;color:#a9a9a9;line-height:17px">0190</div>
<div class="m" style="left:62.5px;top:18px;color:#000;line-height:17px">63 68 0d 0a 4</div>
<div class="m" style="left:8.5px;top:35px;color:#a9a9a9;line-height:17px">01a0</div>
<div class="m" style="left:62.5px;top:35px;color:#000;line-height:17px">61 67 65 3a 2</div>
<div class="m" style="left:8.5px;top:52px;color:#a9a9a9;line-height:17px">01b0</div>
<div class="m" style="left:62.5px;top:52px;color:#000;line-height:17px">30 2e 38 0d 0</div>
<div class="m" style="left:8.5px;top:69px;color:#a9a9a9;line-height:17px">01c0</div>
<div class="m" style="left:62.5px;top:69px;color:#000;line-height:17px">73 65 74 3a 2</div>
<div class="m" style="left:8.5px;top:86px;color:#a9a9a9;line-height:17px">01d0</div>
<div class="m" style="left:62.5px;top:86px;color:#000;line-height:17px">75 74 66 2d 3</div>
<div class="m" style="left:8.5px;top:103px;color:#333;line-height:17px">01e0</div>
<div class="m" style="left:62.5px;top:103px;color:#000;line-height:17px">30 2e 33 0d 0</div>
</div>
<div class="a" style="left:1351px;top:515px;width:15px;height:140px;background:#e2e2e2;border-left:1px solid #cfcfcf"></div><div class="a" style="left:1351px;top:515px;width:15px;height:13px;background:#fdfdfd;border-bottom:1px solid #d0d0d0"></div><div class="a" style="left:1351px;top:642px;width:15px;height:13px;background:#fdfdfd;border-top:1px solid #d0d0d0"></div><svg style="left:1351px;top:515px" width="15" height="13"><path d="M3.5 8.5H11.5L7.5 4.5Z" fill="#404040"/></svg><svg style="left:1351px;top:642px" width="15" height="13"><path d="M3.5 4.5H11.5L7.5 8.5Z" fill="#404040"/></svg><div class="a" style="left:1351px;top:608px;width:15px;height:34px;background:linear-gradient(90deg,#fafafa,#f0f0f0);border-bottom:1px solid #c8c8c8;border-top:1px solid #c8c8c8"></div>
<div class="a" style="left:1171px;top:656px;width:180px;height:13px;background:#e2e2e2"></div><div class="a" style="left:1185px;top:656px;width:26px;height:13px;background:linear-gradient(#fbfbfb,#efefef);border-left:1px solid #c8c8c8;border-right:1px solid #c8c8c8"></div><div class="a" style="left:1171px;top:656px;width:14px;height:13px;background:#fdfdfd;border-right:1px solid #d0d0d0"></div><div class="a" style="left:1337px;top:656px;width:14px;height:13px;background:#fdfdfd;border-left:1px solid #d0d0d0"></div><svg style="left:1171px;top:656px" width="14" height="13"><path d="M9 2.5V10.5L5 6.5Z" fill="#404040"/></svg><svg style="left:1337px;top:656px" width="14" height="13"><path d="M5 2.5V10.5L9 6.5Z" fill="#404040"/></svg>
<div class="a" style="left:1351px;top:655px;width:15px;height:14px;background:#efefef;border-top:1px solid #c8c8c8;border-left:1px solid #c8c8c8"></div>
<div class="a" style="left:1171px;top:655px;width:195px;height:1px;background:#d0d0d0"></div>
<div class="a" style="left:1351px;top:515px;width:1px;height:154px;background:#d0d0d0"></div>
<div class="a" style="left:0;top:670px;width:1366px;height:22px;background:#efefef"></div>
<svg style="left:8px;top:672px" width="18" height="18"><defs><radialGradient id="yel" cx="0.45" cy="0.35" r="0.6"><stop offset="0" stop-color="#efeb88"/><stop offset="1" stop-color="#d9d44a"/></radialGradient></defs><circle cx="9" cy="9" r="6.8" fill="url(#yel)" stroke="#7d7a3a" stroke-width="1"/></svg>
<svg style="left:33px;top:674px" width="16" height="15"><rect x="0.5" y="0.5" width="11" height="13" fill="#f2f2ea" stroke="#d4d4cc" stroke-width="0.8"/><rect x="1" y="0.8" width="10.5" height="3.2" fill="#3c9be0"/><path d="M3 4C3.5 2.5 5 1.5 6.5 1.2C5.8 2.2 5.6 3.2 6 4Z" fill="#f2f2ea"/><g fill="#c8c8c0"><rect x="2" y="6" width="5" height="0.8"/><rect x="2" y="8.5" width="4" height="0.8"/><rect x="2" y="11" width="7" height="0.8"/></g><path d="M12.3 0.3L14.2 2.2L6 10.4L3.6 11.2L4.2 8.5Z" fill="#4a4a4a"/><path d="M3.6 11.2L4.2 8.5L5.6 10Z" fill="#111"/></svg>
<div class="t" style="left:63.95px;top:674px;font-size:15px;color:#000;font-weight:400;font-family:'Liberation Sans';transform:scaleX(1.0301);transform-origin:0 0;">Text item (text), 2 byte(s)</div>
<div class="t" style="left:878.42px;top:674px;font-size:15px;color:#000;font-weight:400;font-family:'Liberation Sans';transform:scaleX(0.9671);transform-origin:0 0;">Packets: 54 · Displayed: 53 (98.1%)</div>
<svg style="left:862px;top:674px" width="4" height="15"><g fill="#bdbdbd"><rect x="1" y="0.0" width="1" height="1"/><rect x="1" y="2.5" width="1" height="1"/><rect x="1" y="5.0" width="1" height="1"/><rect x="1" y="7.5" width="1" height="1"/><rect x="1" y="10.0" width="1" height="1"/><rect x="1" y="12.5" width="1" height="1"/></g></svg>
<svg style="left:1240px;top:674px" width="4" height="15"><g fill="#bdbdbd"><rect x="1" y="0.0" width="1" height="1"/><rect x="1" y="2.5" width="1" height="1"/><rect x="1" y="5.0" width="1" height="1"/><rect x="1" y="7.5" width="1" height="1"/><rect x="1" y="10.0" width="1" height="1"/><rect x="1" y="12.5" width="1" height="1"/></g></svg>
<div class="t" style="left:1255.77px;top:674px;font-size:15px;color:#000;font-weight:400;font-family:'Liberation Sans';transform:scaleX(1.0561);transform-origin:0 0;">Profile: Default</div>
<div class="a" style="left:0;top:692px;width:1366px;height:35px;background:#1b2133"></div>
<svg style="left:0;top:692px" width="120" height="35"><path d="M22.8 9.8V22.2M16.6 16H29" stroke="#e6e6e6" stroke-width="1.8"/><path d="M53.6 11.5A7 7 0 1 0 61.6 11.5" fill="none" stroke="#e6e6e6" stroke-width="1.7"/><path d="M57.6 8.5V16.5" stroke="#e6e6e6" stroke-width="1.7"/><circle cx="94.1" cy="16" r="7.6" fill="none" stroke="#e6e6e6" stroke-width="1.7"/><circle cx="94.1" cy="12.2" r="1.2" fill="#e6e6e6"/><path d="M92.3 14.8H94.8V19.5M92.3 19.8H96.2" fill="none" stroke="#e6e6e6" stroke-width="1.7"/></svg>
<div class="a" style="left:121.5px;top:694px;width:228px;height:29.5px;border:1px solid #30374a;border-radius:5px;background:#151a28"></div>
<div class="t" style="left:131.9px;top:703px;font-size:13px;color:#ffffff;font-weight:400;font-family:'Liberation Sans';transform:scaleX(0.9251);transform-origin:0 0;-webkit-text-stroke:0.35px #fff;">Wireshark-TrafficAnalysis_PROD_v0.2</div>
<div class="t" style="left:1282.45px;top:703px;font-size:14px;color:#f4f6fa;font-weight:400;font-family:'Liberation Sans';transform:scaleX(1.0434);transform-origin:0 0;-webkit-text-stroke:0.2px #f4f6fa;">49min 42s</div>
<div class="a" style="left:0;top:726px;width:1366px;height:1px;background:#101218"></div>
<div class="a" style="left:48px;top:726px;width:288px;height:1px;background:#5a5f6a"></div>
<div class="a" style="left:682px;top:726px;width:48px;height:1px;background:#5a5f6a"></div>
</body></html>
